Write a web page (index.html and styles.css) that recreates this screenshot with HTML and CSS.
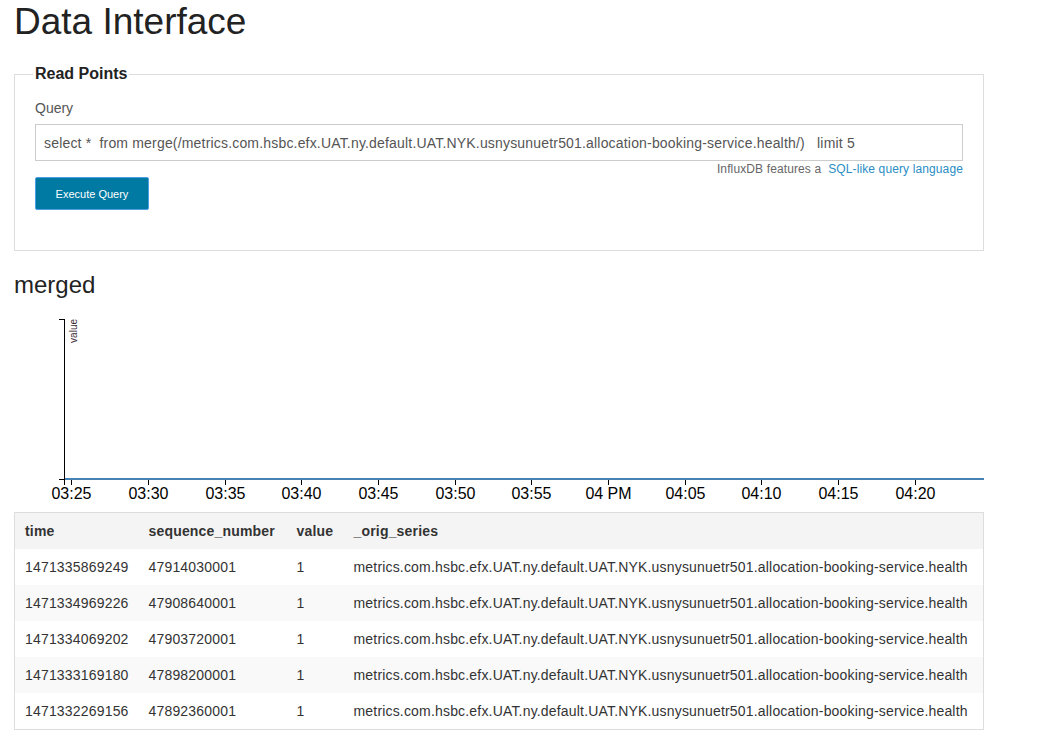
FILE: index.html
```html
<!DOCTYPE html>
<html>
<head>
<meta charset="utf-8">
<title>Data Interface</title>
<link rel="stylesheet" href="styles.css">
</head>
<body>
<div class="page">
  <h1 class="title">Data Interface</h1>

  <fieldset class="panel">
    <legend class="panel-legend">Read Points</legend>
    <label class="field-label" for="q">Query</label>
    <input class="query-input" id="q" type="text" value="select *  from merge(/metrics.com.hsbc.efx.UAT.ny.default.UAT.NYK.usnysunuetr501.allocation-booking-service.health/)   limit 5">
    <div class="help">InfluxDB features a &nbsp;<a class="help-link" href="#">SQL-like query language</a></div>
    <button class="btn" type="button">Execute Query</button>
  </fieldset>

  <h2 class="series-title">merged</h2>

  <svg class="chart" width="970" height="214" viewBox="0 0 970 214">
    <line x1="50" y1="181" x2="970" y2="181" stroke="#4682b4" stroke-width="2"/>
    <g stroke="#000" stroke-width="1" fill="none" shape-rendering="crispEdges">
      <path d="M50.5,21.5V187"/>
      <path d="M44.5,21.5H50.5"/>
      <path d="M44.5,181.5H50.5"/>
      <path d="M57.5,182V187M134.5,182V187M211.5,182V187M287.5,182V187M364.5,182V187M441.5,182V187M517.5,182V187M594.5,182V187M671.5,182V187M747.5,182V187M824.5,182V187M901.5,182V187"/>
    </g>
    <text class="axis-label" transform="rotate(-90)" x="-21" y="63" text-anchor="end">value</text>
    <g class="tick-labels" text-anchor="middle">
      <text x="57.5" y="201">03:25</text>
      <text x="134.5" y="201">03:30</text>
      <text x="211.5" y="201">03:35</text>
      <text x="287.5" y="201">03:40</text>
      <text x="364.5" y="201">03:45</text>
      <text x="441.5" y="201">03:50</text>
      <text x="517.5" y="201">03:55</text>
      <text x="594.5" y="201">04 PM</text>
      <text x="671.5" y="201">04:05</text>
      <text x="747.5" y="201">04:10</text>
      <text x="824.5" y="201">04:15</text>
      <text x="901.5" y="201">04:20</text>
    </g>
  </svg>

  <table class="data-table">
    <colgroup>
      <col class="c-time">
      <col class="c-seq">
      <col class="c-val">
      <col class="c-series">
    </colgroup>
    <thead>
      <tr><th>time</th><th>sequence_number</th><th>value</th><th>_orig_series</th></tr>
    </thead>
    <tbody>
      <tr><td>1471335869249</td><td>47914030001</td><td>1</td><td>metrics.com.hsbc.efx.UAT.ny.default.UAT.NYK.usnysunuetr501.allocation-booking-service.health</td></tr>
      <tr><td>1471334969226</td><td>47908640001</td><td>1</td><td>metrics.com.hsbc.efx.UAT.ny.default.UAT.NYK.usnysunuetr501.allocation-booking-service.health</td></tr>
      <tr><td>1471334069202</td><td>47903720001</td><td>1</td><td>metrics.com.hsbc.efx.UAT.ny.default.UAT.NYK.usnysunuetr501.allocation-booking-service.health</td></tr>
      <tr><td>1471333169180</td><td>47898200001</td><td>1</td><td>metrics.com.hsbc.efx.UAT.ny.default.UAT.NYK.usnysunuetr501.allocation-booking-service.health</td></tr>
      <tr><td>1471332269156</td><td>47892360001</td><td>1</td><td>metrics.com.hsbc.efx.UAT.ny.default.UAT.NYK.usnysunuetr501.allocation-booking-service.health</td></tr>
    </tbody>
  </table>
</div>
</body>
</html>
```

FILE: styles.css
```css
html, body {
  margin: 0;
  padding: 0;
  background: #fff;
}

body {
  font-family: "Liberation Sans", Arial, sans-serif;
  font-size: 14px;
  line-height: 20px;
  color: #333;
}

.page {
  width: 970px;
  margin-left: 14px;
}

.title {
  margin: 1px 0 0;
  font-size: 37px;
  line-height: 42px;
  font-weight: normal;
  color: #222;
}

.panel {
  margin: 22px 0 0;
  padding: 15px 20px 40px;
  border: 1px solid #ddd;
  min-width: 0;
}

.panel-legend {
  padding: 0 2px;
  margin-left: -2px;
  font-size: 16px;
  line-height: 18px;
  font-weight: bold;
  color: #222;
}

.field-label {
  display: block;
  margin-bottom: 6px;
  font-size: 14px;
  line-height: 20px;
  color: #555;
}

.query-input {
  display: block;
  box-sizing: border-box;
  width: 100%;
  height: 37px;
  margin: 0;
  padding: 0 8px;
  border: 1px solid #ccc;
  border-radius: 0;
  font-family: "Liberation Sans", Arial, sans-serif;
  font-size: 14px;
  letter-spacing: 0.18px;
  color: #555;
  background: #fff;
  outline: none;
}

.help {
  font-size: 12px;
  line-height: 16px;
  letter-spacing: 0.12px;
  text-align: right;
  color: #666;
}

.help-link {
  color: #2a8dc4;
  text-decoration: none;
}

.btn {
  display: block;
  box-sizing: border-box;
  width: 114px;
  height: 33px;
  margin: 0;
  padding: 0;
  border: 1px solid #4b9ee0;
  border-radius: 2px;
  background: #007aa2;
  color: #fff;
  font-family: "Liberation Sans", Arial, sans-serif;
  font-size: 11px;
  cursor: pointer;
}

.series-title {
  margin: 21px 0 0;
  font-size: 24px;
  line-height: 26px;
  font-weight: normal;
  color: #222;
}

.chart {
  display: block;
  font-family: "Liberation Sans", Arial, sans-serif;
}

.axis-label {
  font-size: 10px;
  fill: #3a2a33;
}

.tick-labels {
  font-size: 16px;
  fill: #000;
}

.data-table {
  width: 970px;
  border-collapse: collapse;
  table-layout: fixed;
  border: 1px solid #ddd;
  font-size: 14px;
}

.c-time { width: 124px; }
.c-seq { width: 148px; }
.c-val { width: 57px; }

.data-table th,
.data-table td {
  padding: 8px 0 8px 10px;
  line-height: 20px;
  letter-spacing: 0.18px;
  text-align: left;
  white-space: nowrap;
}

.data-table th {
  font-weight: bold;
  background: #f4f4f4;
  color: #333;
}

.data-table tbody tr:nth-child(even) td {
  background: #f9f9f9;
}
```
